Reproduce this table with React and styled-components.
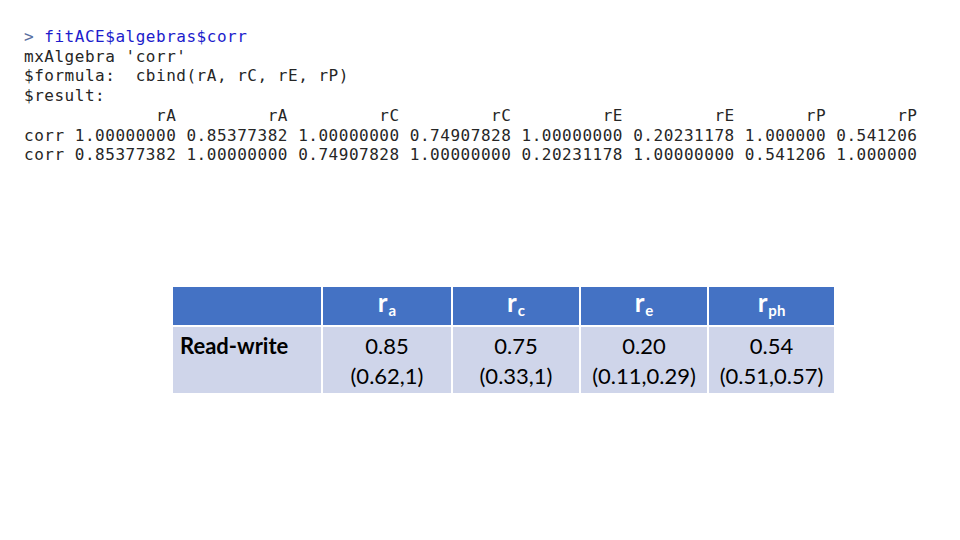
import styled, { createGlobalStyle } from "styled-components";

const GlobalStyle = createGlobalStyle`
  body {
    margin: 0;
    background: #ffffff;
  }
`;

const heads = ["rA", "rA", "rC", "rC", "rE", "rE", "rP", "rP"];
const widths = [10, 10, 10, 10, 10, 10, 8, 8];
const rows = [
  ["1.00000000", "0.85377382", "1.00000000", "0.74907828", "1.00000000", "0.20231178", "1.000000", "0.541206"],
  ["0.85377382", "1.00000000", "0.74907828", "1.00000000", "0.20231178", "1.00000000", "0.541206", "1.000000"],
];

const line = (label, cells) =>
  label.padEnd(4) + cells.map((c, i) => " " + c.padStart(widths[i])).join("");

const results = [
  { sub: "a", est: "0.85", ci: "(0.62,1)" },
  { sub: "c", est: "0.75", ci: "(0.33,1)" },
  { sub: "e", est: "0.20", ci: "(0.11,0.29)" },
  { sub: "ph", est: "0.54", ci: "(0.51,0.57)" },
];

function App() {
  return (
    <Page>
      <GlobalStyle />
      <Console>
        <Line>
          <Prompt>&gt; </Prompt>
          <Command>fitACE$algebras$corr</Command>
        </Line>
        <Line>mxAlgebra 'corr'</Line>
        <Line>$formula:  cbind(rA, rC, rE, rP)</Line>
        <Line>$result:</Line>
        <Line>{line("", heads)}</Line>
        {rows.map((r, i) => (
          <Line key={i}>{line("corr", r)}</Line>
        ))}
      </Console>

      <Table>
        <colgroup>
          <col style={{ width: 150 }} />
          <col style={{ width: 130 }} />
          <col style={{ width: 128 }} />
          <col style={{ width: 128 }} />
          <col style={{ width: 127 }} />
        </colgroup>
        <thead>
          <tr>
            <HeadCell />
            {results.map((r) => (
              <HeadCell key={r.sub}>
                r<Sub>{r.sub}</Sub>
              </HeadCell>
            ))}
          </tr>
        </thead>
        <tbody>
          <tr>
            <LabelCell>Read-write</LabelCell>
            {results.map((r) => (
              <ValueCell key={r.sub}>
                {r.est}
                <br />
                {r.ci}
              </ValueCell>
            ))}
          </tr>
        </tbody>
      </Table>
    </Page>
  );
}

export default App;

const Page = styled.div`
  width: 960px;
  height: 540px;
  padding: 27px 0 0 24px;
  box-sizing: border-box;
  overflow: hidden;
`;

const Console = styled.div`
  font-family: "DejaVu Sans Mono", "Liberation Mono", monospace;
  font-size: 16px;
  letter-spacing: 0.52px;
  line-height: 19.7px;
  color: #262626;
`;

const Line = styled.div`
  white-space: pre;
`;

const Prompt = styled.span`
  color: #5a6fa0;
`;

const Command = styled.span`
  color: #1c1ccc;
`;

const Table = styled.table`
  margin: 120px 0 0 147px;
  border-collapse: collapse;
  table-layout: fixed;
  width: 663px;
  font-family: Lato, "Open Sans", sans-serif;
  font-size: 22px;

  td,
  th {
    border: 2px solid #ffffff;
    padding: 0;
  }
`;

const HeadCell = styled.th`
  background: #4472c4;
  color: #ffffff;
  height: 38px;
  font-size: 26px;
  font-weight: 700;
  text-align: center;
  vertical-align: bottom;
  line-height: 30px;
`;

const Sub = styled.sub`
  font-size: 15px;
  vertical-align: -4px;
  margin-left: 1px;
`;

const LabelCell = styled.td`
  background: #cfd5ea;
  color: #000000;
  font-weight: 700;
  text-align: left;
  vertical-align: top;
  height: 62px;
  line-height: 30px;
  padding: 4px 0 0 7px !important;
`;

const ValueCell = styled.td`
  background: #cfd5ea;
  color: #000000;
  text-align: center;
  vertical-align: top;
  line-height: 30px;
  padding-top: 4px !important;
`;
